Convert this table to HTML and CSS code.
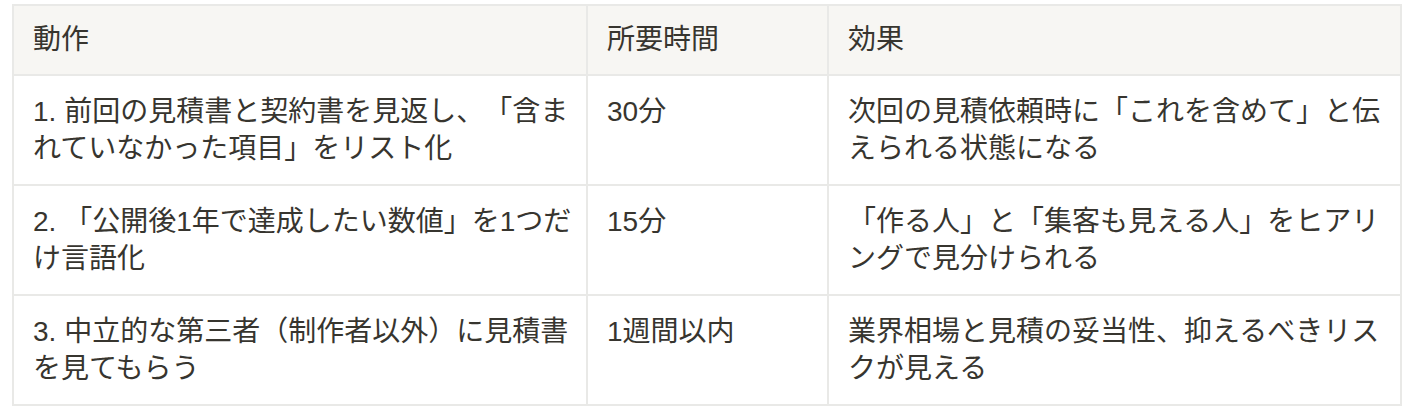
FILE: index.html
```html
<!DOCTYPE html>
<html lang="ja">
<head>
<meta charset="utf-8">
<link rel="stylesheet" href="styles.css">
</head>
<body>
<table class="tbl">
  <colgroup>
    <col class="c1">
    <col class="c2">
    <col class="c3">
  </colgroup>
  <thead>
    <tr><th>動作</th><th>所要時間</th><th>効果</th></tr>
  </thead>
  <tbody>
    <tr>
      <td>1. 前回の見積書と契約書を見返し、「含まれていなかった項目」をリスト化</td>
      <td>30分</td>
      <td>次回の見積依頼時に「これを含めて」と伝えられる状態になる</td>
    </tr>
    <tr>
      <td>2. 「公開後1年で達成したい数値」を1つだけ言語化</td>
      <td>15分</td>
      <td>「作る人」と「集客も見える人」をヒアリングで見分けられる</td>
    </tr>
    <tr>
      <td>3. 中立的な第三者（制作者以外）に見積書を見てもらう</td>
      <td>1週間以内</td>
      <td>業界相場と見積の妥当性、抑えるべきリスクが見える</td>
    </tr>
  </tbody>
</table>
</body>
</html>
```
FILE: styles.css
```css
html, body {
  margin: 0;
  padding: 0;
  background: #ffffff;
}
body {
  padding: 4px 12px 0 12px;
  font-family: "Liberation Sans", "Noto Sans CJK JP", sans-serif;
  color: #37352f;
}
.tbl {
  border-collapse: collapse;
  table-layout: fixed;
  width: 1388px;
  font-size: 28px;
  line-height: 37px;
  text-spacing-trim: space-all;
}
.c1 { width: 574px; }
.c2 { width: 241px; }
.c3 { width: 573px; }
.tbl th,
.tbl td {
  border: 2px solid #e9e9e7;
  text-align: left;
  vertical-align: top;
  padding: 17px 14px 17px 19px;
}
.tbl th {
  background: #f7f6f3;
  font-weight: normal;
  padding-top: 15px;
  padding-bottom: 16px;
}
```
